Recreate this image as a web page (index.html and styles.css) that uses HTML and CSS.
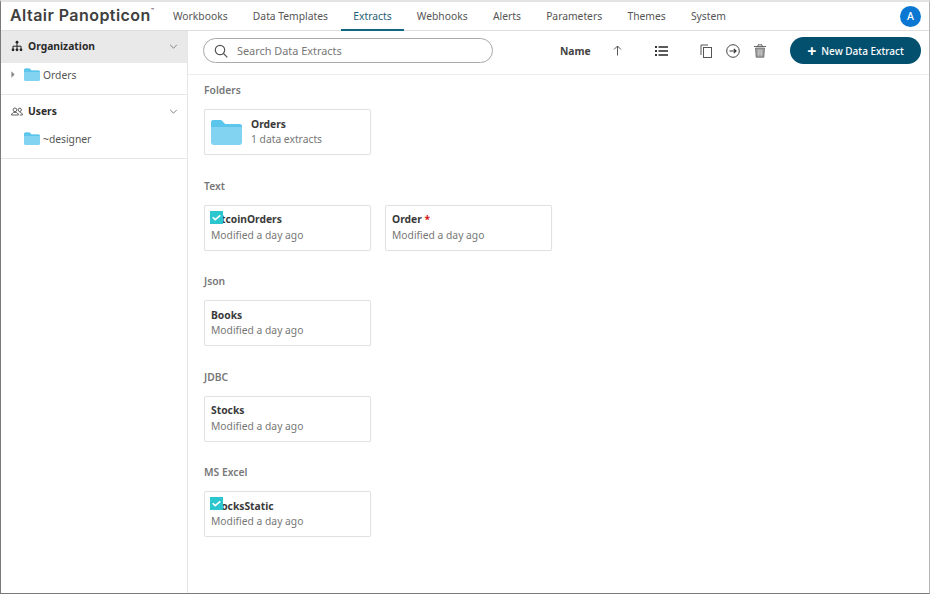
FILE: index.html
```html
<!DOCTYPE html>
<html lang="en">
<head>
<meta charset="utf-8">
<title>Altair Panopticon</title>
<link rel="stylesheet" href="styles.css">
</head>
<body>
<div class="frame">
  <header class="topbar">
    <div class="logo">Altair Panopticon<sup class="tm">™</sup></div>
    <nav class="nav">
      <a class="nav-item">Workbooks</a>
      <a class="nav-item">Data Templates</a>
      <a class="nav-item active">Extracts</a>
      <a class="nav-item">Webhooks</a>
      <a class="nav-item">Alerts</a>
      <a class="nav-item">Parameters</a>
      <a class="nav-item">Themes</a>
      <a class="nav-item">System</a>
    </nav>
    <div class="avatar">A</div>
  </header>
  <div class="body">
    <aside class="sidebar">
      <div class="side-group">
        <div class="side-head selected">
          <svg class="side-icon" viewBox="0 0 12 12"><path d="M6 1.5v3.5M2 9V6.2h8V9M6 5v4" fill="none" stroke="#222" stroke-width="1"/><circle cx="6" cy="2.2" r="1.4" fill="#222"/><circle cx="2" cy="9.8" r="1.4" fill="#222"/><circle cx="6" cy="9.8" r="1.4" fill="#222"/><circle cx="10" cy="9.8" r="1.4" fill="#222"/></svg>
          <span class="side-title">Organization</span>
          <svg class="chev" viewBox="0 0 10 6"><path d="M1 1l4 4 4-4" fill="none" stroke="#777" stroke-width="1.1"/></svg>
        </div>
        <div class="tree-row">
          <svg class="caret" viewBox="0 0 5 8"><path d="M.5 0l4 4-4 4z" fill="#888"/></svg>
          <svg class="folder-sm" viewBox="0 0 16 13"><path d="M0 2a1.500 1.500 0 0 1 1.500-1.500h4l2 2h7A1.500 1.500 0 0 1 16 4v7.500a1.500 1.500 0 0 1-1.500 1.500h-13A1.500 1.500 0 0 1 0 11.500z" fill="#82d3f2"/><path d="M0 2a1.500 1.500 0 0 1 1.500-1.500h4l2 2h7A1.500 1.500 0 0 1 16 4H0z" fill="#5cc5ec"/></svg>
          <span>Orders</span>
        </div>
      </div>
      <div class="side-group">
        <div class="side-head users-head">
          <svg class="side-icon users" viewBox="0 0 13 9"><g fill="none" stroke="#444" stroke-width=".9"><circle cx="4.300" cy="2.700" r="2"/><path d="M.5 8.300c.4-2 1.900-2.900 3.800-2.900s3.400.9 3.800 2.900z"/><circle cx="9.500" cy="2.700" r="1.800"/><path d="M9.500 5.400c1.500 0 2.700.9 3 2.900h-3"/></g></svg>
          <span class="side-title">Users</span>
          <svg class="chev" viewBox="0 0 10 6"><path d="M1 1l4 4 4-4" fill="none" stroke="#777" stroke-width="1.1"/></svg>
        </div>
        <div class="tree-row">
          <span class="caret-gap"></span>
          <svg class="folder-sm" viewBox="0 0 16 13"><path d="M0 2a1.500 1.500 0 0 1 1.500-1.500h4l2 2h7A1.500 1.500 0 0 1 16 4v7.500a1.500 1.500 0 0 1-1.500 1.500h-13A1.500 1.500 0 0 1 0 11.500z" fill="#82d3f2"/><path d="M0 2a1.500 1.500 0 0 1 1.500-1.500h4l2 2h7A1.500 1.500 0 0 1 16 4H0z" fill="#5cc5ec"/></svg>
          <span>~designer</span>
        </div>
      </div>
    </aside>
    <main class="main">
      <div class="toolbar">
        <div class="search">
          <svg class="search-icon" viewBox="0 0 14 14"><circle cx="6" cy="6" r="4.700" fill="none" stroke="#555" stroke-width="1.200"/><path d="M9.500 9.500l3.800 3.800" stroke="#555" stroke-width="1.200"/></svg>
          <span>Search Data Extracts</span>
        </div>
        <div class="sort-name">Name</div>
        <svg class="tool arrow-up" viewBox="0 0 9 11"><path d="M4.500 10.500V1M1 4.500l3.500-3.500L8 4.500" fill="none" stroke="#555" stroke-width="1"/></svg>
        <svg class="tool list" viewBox="0 0 13 10"><g fill="#333"><rect y="0" width="2" height="2"/><rect y="4" width="2" height="2"/><rect y="8" width="2" height="2"/><rect x="3.500" y=".2" width="9.500" height="1.600"/><rect x="3.500" y="4.200" width="9.500" height="1.600"/><rect x="3.500" y="8.200" width="9.500" height="1.600"/></g></svg>
        <svg class="tool copy" viewBox="0 0 12 14"><path d="M8 1H1v10" fill="none" stroke="#555" stroke-width="1"/><rect x="3.500" y="3.500" width="8" height="10" fill="none" stroke="#555" stroke-width="1"/></svg>
        <svg class="tool move" viewBox="0 0 14 14"><circle cx="7" cy="7" r="6.300" fill="none" stroke="#444" stroke-width="1"/><path d="M3.500 7h6.500M7.800 4.800L10 7 7.800 9.200" fill="none" stroke="#333" stroke-width="1.200"/></svg>
        <svg class="tool trash" viewBox="0 0 12 14"><path d="M1.500 4h9l-.6 9.300H2.100z" fill="#9b9b9b" stroke="#666" stroke-width=".7"/><path d="M0 2.500h12M4 2.300V.8h4v1.500" fill="none" stroke="#666" stroke-width="1"/><path d="M4.300 5.500v6M6 5.500v6M7.700 5.500v6" stroke="#eee" stroke-width=".6"/></svg>
        <button class="new-btn"><span class="plus">+</span>New Data Extract</button>
      </div>
      <div class="content">
        <section class="group">
          <h2 class="group-title">Folders</h2>
          <div class="cards">
            <div class="card folder-card">
              <svg class="folder-lg" viewBox="0 0 31 25"><path d="M0 3a3 3 0 0 1 3-3h7l4 4h14a3 3 0 0 1 3 3v15a3 3 0 0 1-3 3H3a3 3 0 0 1-3-3z" fill="#82d3f2"/><path d="M0 3a3 3 0 0 1 3-3h7l4 4h14a3 3 0 0 1 3 3H0z" fill="#5cc5ec"/></svg>
              <div class="folder-text">
                <div class="card-title">Orders</div>
                <div class="card-sub">1 data extracts</div>
              </div>
            </div>
          </div>
        </section>
        <section class="group">
          <h2 class="group-title">Text</h2>
          <div class="cards">
            <div class="card">
              <div class="card-title">BitcoinOrders</div>
              <div class="card-sub">Modified a day ago</div>
              <svg class="check" viewBox="0 0 12 12"><rect width="12" height="12" fill="#2cc6cf"/><path d="M2.500 5.800l2.300 2.200 4.700-4" fill="none" stroke="#fff" stroke-width="1.500"/></svg>
            </div>
            <div class="card">
              <div class="card-title">Order <span class="req">*</span></div>
              <div class="card-sub">Modified a day ago</div>
            </div>
          </div>
        </section>
        <section class="group">
          <h2 class="group-title">Json</h2>
          <div class="cards">
            <div class="card">
              <div class="card-title">Books</div>
              <div class="card-sub">Modified a day ago</div>
            </div>
          </div>
        </section>
        <section class="group">
          <h2 class="group-title">JDBC</h2>
          <div class="cards">
            <div class="card">
              <div class="card-title">Stocks</div>
              <div class="card-sub">Modified a day ago</div>
            </div>
          </div>
        </section>
        <section class="group">
          <h2 class="group-title">MS Excel</h2>
          <div class="cards">
            <div class="card">
              <div class="card-title">StocksStatic</div>
              <div class="card-sub">Modified a day ago</div>
              <svg class="check" viewBox="0 0 12 12"><rect width="12" height="12" fill="#2cc6cf"/><path d="M2.500 5.800l2.300 2.200 4.700-4" fill="none" stroke="#fff" stroke-width="1.500"/></svg>
            </div>
          </div>
        </section>
      </div>
    </main>
  </div>
</div>
</body>
</html>
```
FILE: styles.css
```css
* { box-sizing: border-box; }
html, body { margin: 0; height: 100%; background: #fff; overflow: hidden; }
body { font-family: "Noto Sans", "Open Sans", sans-serif; font-size: 10.300px; color: #555; }
.frame {
  width: 930px; height: 594px;
  border: 1px solid #7a7a7a; border-top: 2px solid #e4e4e4; border-right-color: #b5b5b5;
  display: flex; flex-direction: column;
}
.topbar {
  height: 29px; display: flex; align-items: center; flex: none;
  border-bottom: 1px solid #dedede;
  padding-right: 8px;
}
.logo {
  font-family: "Inter", "Liberation Sans", sans-serif; font-weight: 600; font-size: 16px;
  color: #404040; width: 159.350px; padding: 0 0 2px 9px; white-space: nowrap; letter-spacing: .45px;
}
.tm { font-size: 5px; vertical-align: 9px; line-height: 0; }
.nav { display: flex; flex: 1; height: 100%; }
.nav-item {
  padding: 0 12.650px 2px; display: flex; align-items: center; color: #555; height: 29px;
}
.nav-item.active { color: #1f5f78; border-bottom: 2px solid #0f6880; padding-bottom: 0; }
.avatar {
  width: 21px; height: 21px; border-radius: 50%; background: #0a78d2; color: #fff;
  font-size: 10.500px; font-weight: 500; display: flex; align-items: center; justify-content: center;
}
.body { flex: 1; display: flex; min-height: 0; }
.sidebar { width: 187px; flex: none; border-right: 1px solid #e6e6e6; }
.side-group { border-bottom: 1px solid #e6e6e6; height: 64px; }
.side-head { height: 32px; display: flex; align-items: center; padding: 0 9px 2px 10px; }
.side-head.selected { background: #e9e9e9; }
.side-head.users-head { padding-bottom: 0; }
.side-icon { width: 12px; height: 12px; margin-right: 5px; flex: none; }
.side-icon.users { height: 9px; }
.side-title { font-weight: 700; color: #2b2b2b; flex: 1; }
.chev { width: 9px; height: 5px; flex: none; }
.tree-row { height: 25px; display: flex; align-items: center; color: #555; padding: 0 0 2px 10px; }
.caret { width: 4px; height: 7px; flex: none; margin-right: 9px; }
.caret-gap { width: 13px; flex: none; }
.folder-sm { width: 16px; height: 13px; margin-right: 3px; flex: none; }
.main { flex: 1; min-width: 0; display: flex; flex-direction: column; }
.toolbar {
  height: 44px; flex: none; display: flex; align-items: center;
  border-bottom: 1px solid #ececec; padding: 0 0 4px 15px;
}
.search {
  width: 290px; height: 25px; border: 1px solid #a9a9a9; border-radius: 13px;
  display: flex; align-items: center; padding-left: 10px; color: #777; font-size: 10.900px;
}
.search-icon { width: 14px; height: 14px; margin-right: 9px; flex: none; }
.sort-name { margin-left: 67px; width: 31px; font-weight: 700; color: #444; }
.tool { flex: none; }
.arrow-up { width: 9px; height: 11px; margin-left: 22px; }
.list { width: 13px; height: 10px; margin-left: 33px; }
.copy { width: 12px; height: 14px; margin-left: 32px; }
.move { width: 14px; height: 14px; margin-left: 14px; }
.trash { width: 12px; height: 14px; margin-left: 14px; }
.new-btn {
  margin-left: 24px; width: 131px; height: 27px; border: 0; border-radius: 14px;
  background: #03506e; color: #fff; font: 500 10px "Noto Sans", sans-serif;
  display: flex; align-items: center; justify-content: center; padding: 0;
}
.plus { font-size: 16px; font-weight: 700; margin-right: 5px; line-height: 1; }
.content { padding: 8px 15px 0 16px; flex: 1; }
.group { height: 95.500px; }
.group-title { margin: 0; font-size: 10.300px; font-weight: 600; color: #777; line-height: 15px; }
.cards { display: flex; gap: 14px; margin-top: 11px; }
.card {
  width: 167px; height: 46px; border: 1px solid #e2e2e2; border-radius: 2px; background: #fff;
  padding: 5.900px 6px 0; position: relative; box-shadow: 0 0 1px rgba(0,0,0,.08);
}
.card-title { font-weight: 700; color: #3a3a3a; line-height: 16px; }
.card-sub { color: #777; line-height: 15px; margin-top: .130px; }
.req { color: #d01818; }
.folder-card { display: flex; align-items: center; gap: 9px; padding: 0 6px; }
.folder-text { margin-bottom: 1px; }
.folder-text .card-title { line-height: 15px; }
.folder-text .card-sub { margin-top: 0; }
.folder-lg { width: 31px; height: 25px; flex: none; }
.check { position: absolute; left: 5px; top: 5px; width: 13px; height: 13px; }
```
